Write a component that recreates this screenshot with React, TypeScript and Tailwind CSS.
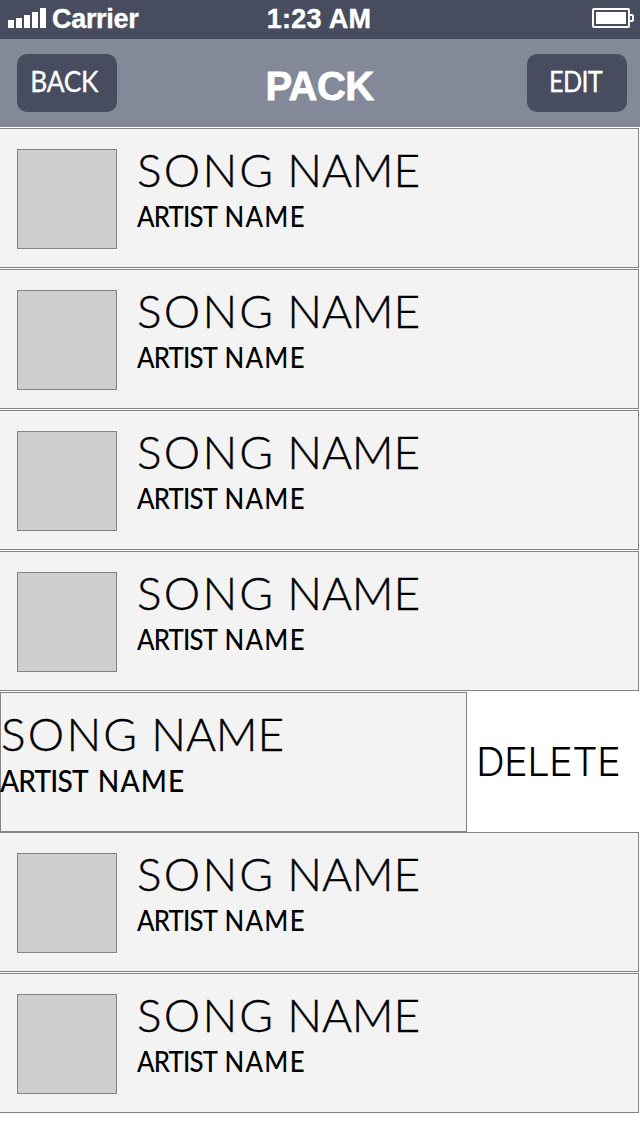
import React from "react";

function StatusBar() {
  return (
    <div className="grid h-[39px] grid-cols-3 bg-[#474d5f] text-white">
      <div className="flex items-start pt-2 pl-2">
        <svg width="38" height="20" viewBox="0 0 38 20" fill="#fff" shapeRendering="crispEdges">
          <rect x="0" y="12" width="6" height="8" />
          <rect x="8" y="10" width="6" height="10" />
          <rect x="16" y="7" width="6" height="13" />
          <rect x="24" y="4" width="6" height="16" />
          <rect x="32" y="0" width="6" height="20" />
        </svg>
        <span className="ml-[6px] text-[27px] leading-[22px] font-bold tracking-[-0.3px] [-webkit-text-stroke:0.4px_white]">Carrier</span>
      </div>
      <div className="pt-2 pr-[2px] text-center text-[27px] leading-[22px] font-bold tracking-[0.25px] whitespace-nowrap [-webkit-text-stroke:0.4px_white]">
        1:23 AM
      </div>
      <div className="flex justify-end pt-2 pr-[6px]">
        <svg width="42" height="20" viewBox="0 0 42 20" fill="none">
          <rect x="1" y="1" width="36" height="18" rx="1" stroke="#fff" strokeWidth="2" />
          <rect x="4" y="4" width="30" height="12" fill="#fff" />
          <path d="M38 7h2q1 0 1 1v4q0 1-1 1h-2" stroke="#fff" strokeWidth="2" />
        </svg>
      </div>
    </div>
  );
}

function HeaderButton({ children }: { children: React.ReactNode }) {
  return (
    <button className="h-[58px] w-[100px] rounded-[10px] bg-[#474d5f] pb-[4px] text-center font-[Lato,sans-serif] text-[28px] leading-[54px] text-white [-webkit-text-stroke:0.3px_white]">
      {children}
    </button>
  );
}

function Header() {
  return (
    <div className="flex h-[88px] items-start justify-between bg-[#838998] pt-[15px] pr-[13px] pl-[17px]">
      <HeaderButton>
        <span className="mr-[5px] inline-block scale-x-[0.94] tracking-[-0.3px]">BACK</span>
      </HeaderButton>
      <h1 className="mr-[5px] pt-[9px] text-[40px] leading-[46px] font-bold tracking-[-0.6px] text-white [-webkit-text-stroke:0.8px_white]">
        PACK
      </h1>
      <HeaderButton>
        <span className="mr-[3px] inline-block scale-x-[0.9] tracking-[-0.7px]">EDIT</span>
      </HeaderButton>
    </div>
  );
}

function SongName() {
  return (
    <div className="flex gap-[12px] text-[46px] leading-[46px] font-light [-webkit-text-stroke:0.4px_black]">
      <span className="tracking-[2.2px]">SONG</span>
      <span className="tracking-[-0.2px]">NAME</span>
    </div>
  );
}

function SongRow() {
  return (
    <div className="flex h-[140px] w-[639px] border-y border-r border-[#838383] bg-[#f3f3f3] font-[Lato,sans-serif] text-black">
      <div className="mt-5 ml-[17px] size-[100px] border border-[#838383] bg-[#cecece]" />
      <div className="ml-5 pt-[18px]">
        <SongName />
        <div className="mt-[9px] flex origin-left scale-x-[0.92] gap-[8px] text-[28px] leading-[28px] font-medium">
          <span className="tracking-[-0.9px]">ARTIST</span>
          <span className="tracking-[1.4px]">NAME</span>
        </div>
      </div>
    </div>
  );
}

function SwipedRow() {
  return (
    <div className="flex h-[140px]">
      <div className="w-[467px] border border-[#838383] bg-[#f3f3f3] pt-[18px] font-[Lato,sans-serif] text-black">
        <SongName />
        <div className="mt-[8px] -ml-px flex origin-left scale-x-[0.92] gap-[11px] text-[30.5px] leading-[30px] font-medium">
          <span className="tracking-[-0.9px]">ARTIST</span>
          <span className="tracking-[1.2px]">NAME</span>
        </div>
      </div>
      <button className="flex-1 bg-white pl-[9px] text-left font-[Inter,sans-serif] text-[40px] leading-[140px] font-light tracking-[-0.7px] text-black">
        DELETE
      </button>
    </div>
  );
}

export default function App() {
  return (
    <div className="flex h-[1136px] w-[640px] flex-col overflow-hidden bg-white font-['Liberation_Sans',sans-serif]">
      <StatusBar />
      <Header />
      <div className="mt-px flex flex-col gap-px">
        <SongRow />
        <SongRow />
        <SongRow />
        <SongRow />
        <SwipedRow />
      </div>
      <div className="flex flex-col gap-px">
        <SongRow />
        <SongRow />
      </div>
    </div>
  );
}
